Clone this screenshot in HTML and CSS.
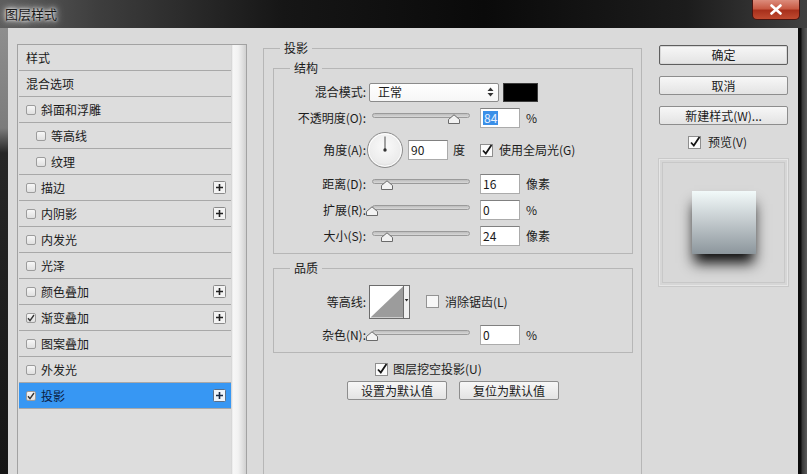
FILE: index.html
```html
<!DOCTYPE html>
<html lang="zh-CN">
<head>
<meta charset="utf-8">
<title>图层样式</title>
<link rel="stylesheet" href="styles.css">
</head>
<body>
<div class="win">
  <div class="titlebar">
    <span class="title">图层样式</span>
    <div class="close"><svg width="14" height="11" viewBox="0 0 14 11"><path d="M2.5 1.5 L11.5 9.5 M11.5 1.5 L2.5 9.5" stroke="#fff" stroke-width="2.6" stroke-linecap="round"/></svg></div>
  </div>
  <div class="body">
    <div class="frame-l"></div>
    <div class="main">
      <div class="left">
        <div class="list">
          <div class="rows">
            <div class="row"><span>样式</span></div>
            <div class="row"><span>混合选项</span></div>
            <div class="row"><span class="lcb"></span><span>斜面和浮雕</span></div>
            <div class="row sub"><span class="lcb"></span><span>等高线</span></div>
            <div class="row sub"><span class="lcb"></span><span>纹理</span></div>
            <div class="row"><span class="lcb"></span><span>描边</span><svg class="plus" width="13" height="13" viewBox="0 0 13 13"><rect x="0.5" y="0.5" width="12" height="12" rx="1" fill="#f3f3f3" stroke="#8a8a8a"/><path d="M3 6.5h7M6.5 3v7" stroke="#222" stroke-width="1.6"/></svg></div>
            <div class="row"><span class="lcb"></span><span>内阴影</span><svg class="plus" width="13" height="13" viewBox="0 0 13 13"><rect x="0.5" y="0.5" width="12" height="12" rx="1" fill="#f3f3f3" stroke="#8a8a8a"/><path d="M3 6.5h7M6.5 3v7" stroke="#222" stroke-width="1.6"/></svg></div>
            <div class="row"><span class="lcb"></span><span>内发光</span></div>
            <div class="row"><span class="lcb"></span><span>光泽</span></div>
            <div class="row"><span class="lcb"></span><span>颜色叠加</span><svg class="plus" width="13" height="13" viewBox="0 0 13 13"><rect x="0.5" y="0.5" width="12" height="12" rx="1" fill="#f3f3f3" stroke="#8a8a8a"/><path d="M3 6.5h7M6.5 3v7" stroke="#222" stroke-width="1.6"/></svg></div>
            <div class="row"><span class="lcb"><svg width="8" height="8" viewBox="0 0 8 8"><path d="M1 4.2 L3 6.6 L7 1" fill="none" stroke="#333" stroke-width="1.4"/></svg></span><span>渐变叠加</span><svg class="plus" width="13" height="13" viewBox="0 0 13 13"><rect x="0.5" y="0.5" width="12" height="12" rx="1" fill="#f3f3f3" stroke="#8a8a8a"/><path d="M3 6.5h7M6.5 3v7" stroke="#222" stroke-width="1.6"/></svg></div>
            <div class="row"><span class="lcb"></span><span>图案叠加</span></div>
            <div class="row"><span class="lcb"></span><span>外发光</span></div>
            <div class="row sel-row"><span class="lcb"><svg width="8" height="8" viewBox="0 0 8 8"><path d="M1 4.2 L3 6.6 L7 1" fill="none" stroke="#333" stroke-width="1.4"/></svg></span><span>投影</span><svg class="plus" width="13" height="13" viewBox="0 0 13 13"><rect x="0.5" y="0.5" width="12" height="12" rx="1" fill="#eef4fb" stroke="#5a6f88"/><path d="M3 6.5h7M6.5 3v7" stroke="#1a2a44" stroke-width="1.6"/></svg></div>
          </div>
          <div class="scroll"></div>
        </div>
      </div>

      <div class="center">
        <fieldset class="fs outer">
          <legend class="lg-outer">投影</legend>
          <fieldset class="fs inner">
            <legend class="lg-inner">结构</legend>
            <div class="r r-blend">
              <span class="lab">混合模式:</span>
              <div class="sel"><span>正常</span><svg width="7" height="10" viewBox="0 0 7 10"><path d="M3.5 0.5 L6.5 4 H0.5Z M0.5 6 H6.5 L3.5 9.5Z" fill="#333"/></svg></div>
              <span class="swatch"></span>
            </div>
            <div class="r r-op">
              <span class="lab">不透明度(O):</span>
              <div class="slider"><span class="track"></span><svg class="thumb" style="left:79px" width="12" height="10" viewBox="0 0 12 10"><path d="M0.5 9.5 V5.5 L6 0.8 L11.5 5.5 V9.5 Z" fill="#f2f2f2" stroke="#6a6a6a"/></svg></div>
              <div class="num"><span class="hl">84</span></div>
              <span class="unit">%</span>
            </div>
            <div class="r r-angle">
              <span class="lab">角度(A):</span>
              <svg class="dial" width="36" height="36" viewBox="0 0 36 36"><defs><radialGradient id="dg" cx="0.5" cy="0.4" r="0.6"><stop offset="0" stop-color="#fafafa"/><stop offset="0.8" stop-color="#ececec"/><stop offset="1" stop-color="#d6d6d6"/></radialGradient></defs><circle cx="18" cy="18" r="17.5" fill="url(#dg)" stroke="#8c8c8c"/><circle cx="18" cy="18" r="16.3" fill="none" stroke="#ffffff" stroke-width="1"/><path d="M18 4.5 V18" stroke="#4a4a4a" stroke-width="1"/><circle cx="18" cy="18" r="1.7" fill="#333"/></svg>
              <div class="num n-angle">90</div>
              <span class="deg">度</span>
              <svg class="cbx cb-global" width="14" height="14" viewBox="0 0 14 14"><rect x="0.5" y="1.5" width="12" height="12" fill="#fbfbfb" stroke="#8e8e8e"/><path d="M3 7.5 L5.8 10.5 L11.5 2" fill="none" stroke="#151515" stroke-width="1.8"/></svg>
              <span class="ctext">使用全局光(G)</span>
            </div>
            <div class="r">
              <span class="lab">距离(D):</span>
              <div class="slider"><span class="track"></span><svg class="thumb" style="left:12px" width="12" height="10" viewBox="0 0 12 10"><path d="M0.5 9.5 V5.5 L6 0.8 L11.5 5.5 V9.5 Z" fill="#f2f2f2" stroke="#6a6a6a"/></svg></div>
              <div class="num">16</div>
              <span class="unit">像素</span>
            </div>
            <div class="r">
              <span class="lab">扩展(R):</span>
              <div class="slider"><span class="track"></span><svg class="thumb" style="left:-3px" width="12" height="10" viewBox="0 0 12 10"><path d="M0.5 9.5 V5.5 L6 0.8 L11.5 5.5 V9.5 Z" fill="#f2f2f2" stroke="#6a6a6a"/></svg></div>
              <div class="num">0</div>
              <span class="unit">%</span>
            </div>
            <div class="r r-last">
              <span class="lab">大小(S):</span>
              <div class="slider"><span class="track"></span><svg class="thumb" style="left:12px" width="12" height="10" viewBox="0 0 12 10"><path d="M0.5 9.5 V5.5 L6 0.8 L11.5 5.5 V9.5 Z" fill="#f2f2f2" stroke="#6a6a6a"/></svg></div>
              <div class="num">24</div>
              <span class="unit">像素</span>
            </div>
          </fieldset>

          <fieldset class="fs inner quality">
            <legend class="lg-inner">品质</legend>
            <div class="r r-contour">
              <span class="lab">等高线:</span>
              <svg class="contour" width="41" height="34" viewBox="0 0 41 34"><rect x="0.5" y="0.5" width="40" height="33" fill="#fff" stroke="#6c6c6c"/><path d="M1.5 32.5 L34 1.5 L34 32.5 Z" fill="#9c9c9c"/><rect x="34.5" y="0.5" width="6" height="33" fill="#f0f0f0" stroke="#6c6c6c"/><path d="M35.8 14 h3.6 l-1.8 2.4z" fill="#222"/></svg>
              <svg class="cbx cb-aa" width="14" height="14" viewBox="0 0 14 14"><rect x="0.5" y="0.5" width="12" height="12" fill="#f7f7f7" stroke="#939393"/></svg>
              <span class="ctext">消除锯齿(L)</span>
            </div>
            <div class="r r-last">
              <span class="lab">杂色(N):</span>
              <div class="slider"><span class="track"></span><svg class="thumb" style="left:-3px" width="12" height="10" viewBox="0 0 12 10"><path d="M0.5 9.5 V5.5 L6 0.8 L11.5 5.5 V9.5 Z" fill="#f2f2f2" stroke="#6a6a6a"/></svg></div>
              <div class="num">0</div>
              <span class="unit">%</span>
            </div>
          </fieldset>

          <div class="knock">
            <svg class="cbx" width="14" height="14" viewBox="0 0 14 14"><rect x="0.5" y="1.5" width="12" height="12" fill="#fbfbfb" stroke="#8e8e8e"/><path d="M3 7.5 L5.8 10.5 L11.5 2" fill="none" stroke="#151515" stroke-width="1.8"/></svg>
            <span class="ktext">图层挖空投影(U)</span>
          </div>
          <div class="btns">
            <div class="btn">设置为默认值</div>
            <div class="btn">复位为默认值</div>
          </div>
        </fieldset>
      </div>

      <div class="right">
        <div class="btn pbtn ok">确定</div>
        <div class="btn pbtn">取消</div>
        <div class="btn pbtn">新建样式(W)...</div>
        <div class="pv">
          <svg class="cbx" width="14" height="14" viewBox="0 0 14 14"><rect x="0.5" y="1.5" width="12" height="12" fill="#fbfbfb" stroke="#8e8e8e"/><path d="M3 7.5 L5.8 10.5 L11.5 2" fill="none" stroke="#151515" stroke-width="1.8"/></svg>
          <span class="pvtext">预览(V)</span>
        </div>
        <div class="preview"><div class="square"></div></div>
      </div>
    </div>
    <div class="frame-r"></div>
  </div>
</div>
</body>
</html>
```

FILE: styles.css
```css
* { box-sizing: border-box; }
html, body { margin: 0; padding: 0; }
body {
  width: 807px;
  height: 474px;
  overflow: hidden;
  background: #dadada;
  font-family: "Noto Sans CJK SC", "Noto Sans", sans-serif;
  font-size: 12px;
  line-height: 16px;
  color: #1c1c1c;
}
.win { width: 807px; height: 474px; display: flex; flex-direction: column; }

/* title bar */
.titlebar {
  height: 28px;
  flex: none;
  display: flex;
  align-items: flex-start;
  background: linear-gradient(to right, #5e5e5e 0, #3e3e3e 12%, #161616 35%, #0a0a0a 60%, #1c1c1c 85%, #404040 100%);
}
.title {
  padding: 6px 0 0 5px;
  font-size: 13px;
  line-height: 16px;
  color: #1a1a1a;
  text-shadow: 0 0 3px #fff, 0 0 6px #f0f0f0, 0 0 10px #cfcfcf;
}
.close {
  margin-left: auto;
  margin-right: 7px;
  width: 48px;
  height: 20px;
  border: 1px solid #4a1410;
  border-top: none;
  border-radius: 0 0 5px 5px;
  background: linear-gradient(#dc8c7c 0, #c85a44 45%, #a8301c 55%, #c04a30 100%);
  display: flex;
  align-items: center;
  justify-content: center;
}

.body { flex: 1; display: flex; min-height: 0; }
.frame-l {
  width: 8px;
  flex: none;
  background: linear-gradient(#8e8e8e 0, #7c7c7c 100px, #262626 125px, #161616 100%);
}
.frame-r {
  width: 9px;
  flex: none;
  background: linear-gradient(to right, #0c0c0c 0, #0c0c0c 3px, #363636 4px, #5a5a5a 100%);
}
.main { flex: 1; display: flex; overflow: hidden; background: #dadada; }

/* left list */
.left { width: 239px; flex: none; padding: 16px 0 0 9px; }
.list {
  display: flex;
  height: 440px;
  border: 1px solid #a2a2a2;
  border-bottom: none;
  background: #dddddd;
}
.rows { width: 213px; padding-left: 1px; flex: none; }
.row {
  height: 26px;
  border-bottom: 1px solid #a8a8a8;
  display: flex;
  align-items: center;
  padding-left: 7px;
  color: #1a1a1a;
}
.row.sub { padding-left: 17px; }
.lcb {
  width: 10px;
  height: 10px;
  flex: none;
  margin-right: 5px;
  border: 1px solid #9c9c9c;
  border-radius: 2px;
  background: linear-gradient(#f7f7f7, #e0e0e0);
  display: flex;
  align-items: center;
  justify-content: center;
}
.plus { margin-left: auto; margin-right: 5px; flex: none; }
.sel-row { background: #3797f3; color: #0a1c44; }
.scroll {
  width: 15px;
  flex: none;
  background: linear-gradient(to right, #cdcdcd 0, #f7f7f7 2px, #f2f2f2 7px, #e2e2e2 11px, #d0d0d0 15px);
}

/* center */
.center { width: 379px; flex: none; margin-left: 16px; padding-top: 12px; }
.fs { margin: 0; border: 1px solid #b6b6b6; min-width: 0; }
legend { padding: 0 4px; line-height: 16px; height: 16px; font-size: 12px; color: #1a1a1a; }
.outer { height: 470px; padding: 4px 8px 0 9px; }
.lg-outer { margin-left: 7px; }
.inner { padding: 6px 0 7px 0; }
.lg-inner { margin-left: 16px; }
.quality { margin-top: 6px; padding-top: 9px; }

.r { display: flex; align-items: center; height: 20px; margin-bottom: 6px; }
.r-op { margin-bottom: 4px; }
.r-angle { height: 36px; }
.r-last { margin-bottom: 0; }
.r-contour { height: 34px; }
.lab { width: 92px; flex: none; text-align: right; margin-right: 3px; white-space: nowrap; }

.sel {
  width: 130px;
  height: 19px;
  flex: none;
  border: 1px solid #8b8b8b;
  border-radius: 2px;
  background: linear-gradient(#ffffff, #f6f6f6);
  display: flex;
  align-items: center;
  justify-content: space-between;
  padding: 0 4px 0 8px;
}
.swatch { width: 35px; height: 19px; flex: none; margin-left: 4px; background: #000; border: 1px solid #3c3c3c; }

.slider { position: relative; width: 111px; height: 20px; flex: none; }
.track {
  display: block;
  margin: 5px 0 0 3px;
  width: 98px;
  height: 5px;
  border: 1px solid #9a9a9a;
  border-radius: 3px;
  background: linear-gradient(#bdbdbd, #d8d8d8);
}
.thumb { position: absolute; top: 6px; }

.num {
  width: 40px;
  height: 20px;
  flex: none;
  background: #fff;
  border: 1px solid #ababab;
  border-top-color: #808080;
  padding-left: 2px;
  display: flex;
  align-items: center;
  font-size: 12px;
  color: #1a1a1a;
}
.hl { background: #3a8fe8; color: #e6f0ff; padding: 0 1px; line-height: 14px; }
.unit { margin-left: 6px; }

.dial { margin-left: -2px; flex: none; }
.n-angle { margin-left: 5px; }
.deg { margin-left: 5px; }
.cbx { flex: none; }
.cb-global { margin-left: 15px; }
.cb-aa { margin-left: 16px; }
.ctext { margin-left: 5px; }
.contour { flex: none; }

.knock { display: flex; align-items: center; height: 14px; margin-top: 9px; padding-left: 102px; }
.ktext { margin-left: 4px; }
.btns { display: flex; justify-content: center; gap: 12px; margin-top: 5px; }
.btn {
  width: 100px;
  height: 19px;
  border: 1px solid #8d8d8d;
  border-radius: 2px;
  background: linear-gradient(#f7f7f7, #e3e3e3);
  display: flex;
  align-items: center;
  justify-content: center;
  color: #1a1a1a;
}

/* right */
.right { width: 129px; flex: none; margin-left: 17px; padding-top: 17px; }
.pbtn { width: 129px; margin-bottom: 11px; }
.ok { height: 20px; border-color: #5e5e5e; box-shadow: inset 0 0 0 1px #d8d8d8; }
.pv { display: flex; align-items: center; height: 14px; margin-top: -1px; padding-left: 29px; }
.pvtext { margin-left: 6px; }
.preview {
  margin: 9px 0 0 -1px;
  width: 131px;
  height: 129px;
  border: 1px solid #c9c9c9;
  box-shadow: inset 0 0 0 1px #e6e6e6, inset 0 0 0 3px #d6d6d6, inset 0 0 0 4px #c8c8c8;
  background: #d8d8d8;
  display: flex;
  align-items: center;
  justify-content: center;
}
.square {
  width: 64px;
  height: 63px;
  background: linear-gradient(#f2fafa, #c6cdd0 45%, #8c969c);
  box-shadow: 0 11px 13px -2px rgba(0, 0, 0, 0.95);
}
```
